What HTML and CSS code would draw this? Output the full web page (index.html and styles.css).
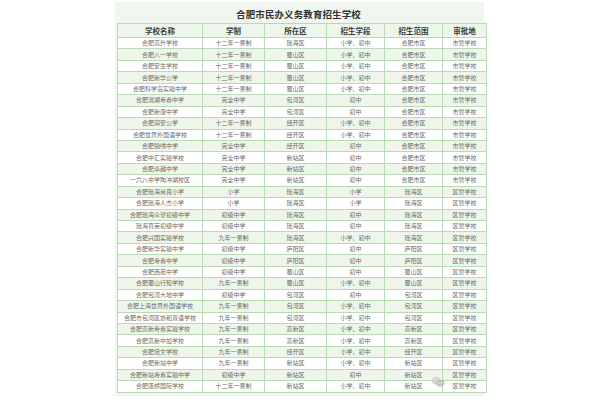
FILE: index.html
```html
<!DOCTYPE html>
<html lang="zh">
<head>
<meta charset="utf-8">
<link rel="stylesheet" href="styles.css">
</head>
<body>
<div class="panel">
  <h1 class="title">合肥市民办义务教育招生学校</h1>
  <table class="grid">
    <thead>
      <tr><th>学校名称</th><th>学制</th><th>所在区</th><th>招生学段</th><th>招生范围</th><th>审批地</th></tr>
    </thead>
    <tbody>
      <tr><td>合肥高升学校</td><td>十二年一贯制</td><td>瑶海区</td><td>小学、初中</td><td>合肥市区</td><td>市管学校</td></tr>
      <tr><td>合肥八一学校</td><td>十二年一贯制</td><td>蜀山区</td><td>小学、初中</td><td>合肥市区</td><td>市管学校</td></tr>
      <tr><td>合肥安生学校</td><td>十二年一贯制</td><td>蜀山区</td><td>小学、初中</td><td>合肥市区</td><td>市管学校</td></tr>
      <tr><td>合肥新华公学</td><td>十二年一贯制</td><td>蜀山区</td><td>小学、初中</td><td>合肥市区</td><td>市管学校</td></tr>
      <tr><td>合肥科学岛实验中学</td><td>十二年一贯制</td><td>蜀山区</td><td>小学、初中</td><td>合肥市区</td><td>市管学校</td></tr>
      <tr><td>合肥滨湖寿春中学</td><td>完全中学</td><td>包河区</td><td>初中</td><td>合肥市区</td><td>市管学校</td></tr>
      <tr><td>合肥新康中学</td><td>完全中学</td><td>包河区</td><td>初中</td><td>合肥市区</td><td>市管学校</td></tr>
      <tr><td>合肥润安公学</td><td>十二年一贯制</td><td>经开区</td><td>小学、初中</td><td>合肥市区</td><td>市管学校</td></tr>
      <tr><td>合肥世界外国语学校</td><td>十二年一贯制</td><td>经开区</td><td>小学、初中</td><td>合肥市区</td><td>市管学校</td></tr>
      <tr><td>合肥锦绣中学</td><td>完全中学</td><td>经开区</td><td>初中</td><td>合肥市区</td><td>市管学校</td></tr>
      <tr><td>合肥中汇实验学校</td><td>完全中学</td><td>新站区</td><td>初中</td><td>合肥市区</td><td>市管学校</td></tr>
      <tr><td>合肥卓越中学</td><td>完全中学</td><td>新站区</td><td>初中</td><td>合肥市区</td><td>市管学校</td></tr>
      <tr><td>一六八中学陶冲湖校区</td><td>完全中学</td><td>新站区</td><td>初中</td><td>合肥市区</td><td>市管学校</td></tr>
      <tr><td>合肥瑶海尚真小学</td><td>小学</td><td>瑶海区</td><td>小学</td><td>瑶海区</td><td>区管学校</td></tr>
      <tr><td>合肥瑶海人杰小学</td><td>小学</td><td>瑶海区</td><td>小学</td><td>瑶海区</td><td>区管学校</td></tr>
      <tr><td>合肥瑶海众望初级中学</td><td>初级中学</td><td>瑶海区</td><td>初中</td><td>瑶海区</td><td>区管学校</td></tr>
      <tr><td>瑶海育英初级中学</td><td>初级中学</td><td>瑶海区</td><td>初中</td><td>瑶海区</td><td>区管学校</td></tr>
      <tr><td>合肥兴国实验学校</td><td>九年一贯制</td><td>瑶海区</td><td>小学、初中</td><td>瑶海区</td><td>区管学校</td></tr>
      <tr><td>合肥新华实验中学</td><td>初级中学</td><td>庐阳区</td><td>初中</td><td>庐阳区</td><td>区管学校</td></tr>
      <tr><td>合肥寿春中学</td><td>初级中学</td><td>庐阳区</td><td>初中</td><td>庐阳区</td><td>区管学校</td></tr>
      <tr><td>合肥西苑中学</td><td>初级中学</td><td>蜀山区</td><td>初中</td><td>蜀山区</td><td>区管学校</td></tr>
      <tr><td>合肥蜀山行知学校</td><td>九年一贯制</td><td>蜀山区</td><td>小学、初中</td><td>蜀山区</td><td>区管学校</td></tr>
      <tr><td>合肥包河大地中学</td><td>初级中学</td><td>包河区</td><td>初中</td><td>包河区</td><td>区管学校</td></tr>
      <tr><td>合肥上海世界外国语学校</td><td>九年一贯制</td><td>包河区</td><td>小学、初中</td><td>包河区</td><td>区管学校</td></tr>
      <tr><td>合肥市包河区协和双语学校</td><td>九年一贯制</td><td>包河区</td><td>小学、初中</td><td>包河区</td><td>区管学校</td></tr>
      <tr><td>合肥高新寿春实验学校</td><td>九年一贯制</td><td>高新区</td><td>小学、初中</td><td>高新区</td><td>区管学校</td></tr>
      <tr><td>合肥高新中加学校</td><td>九年一贯制</td><td>高新区</td><td>小学、初中</td><td>高新区</td><td>区管学校</td></tr>
      <tr><td>合肥培文学校</td><td>九年一贯制</td><td>经开区</td><td>小学、初中</td><td>经开区</td><td>区管学校</td></tr>
      <tr><td>合肥新站中学</td><td>九年一贯制</td><td>新站区</td><td>小学、初中</td><td>新站区</td><td>区管学校</td></tr>
      <tr><td>合肥新站寿春实验中学</td><td>初级中学</td><td>新站区</td><td>初中</td><td>新站区</td><td>区管学校</td></tr>
      <tr><td>合肥康桥国际学校</td><td>十二年一贯制</td><td>新站区</td><td>小学、初中</td><td>新站区</td><td>区管学校</td></tr>
    </tbody>
  </table>
  <div class="mark" aria-hidden="true">
    <svg class="mark-icon" viewBox="0 0 16 14" width="14" height="12">
      <ellipse cx="6" cy="5.5" rx="5.5" ry="4.5" fill="#cfcfcf"/>
      <ellipse cx="10.5" cy="8.5" rx="5" ry="4" fill="#bdbdbd"/>
      <circle cx="4" cy="4.5" r="0.8" fill="#fff"/>
      <circle cx="8" cy="4.5" r="0.8" fill="#fff"/>
      <circle cx="9" cy="8" r="0.7" fill="#fff"/>
      <circle cx="12" cy="8" r="0.7" fill="#fff"/>
    </svg>
  </div>
</div>
</body>
</html>
```

FILE: styles.css
```css
html, body {
  margin: 0;
  padding: 0;
  background: #ffffff;
}

body {
  width: 600px;
  height: 400px;
  overflow: hidden;
  font-family: "Noto Sans CJK SC", "Noto Sans", sans-serif;
}

.panel {
  position: relative;
  margin: 2px 0 0 115px;
  width: 369px;
  height: 394px;
  box-sizing: border-box;
  padding: 0 4px 0 2px;
  background: linear-gradient(180deg, #f1f7f0 0%, #eef6ee 100%);
  display: flex;
  flex-direction: column;
}

.title {
  margin: 0;
  height: 21px;
  box-sizing: border-box;
  padding-top: 6px;
  text-align: center;
  font-size: 9.5px;
  line-height: 13px;
  font-weight: 700;
  color: #333333;
  letter-spacing: 0.1px;
  font-family: "Noto Sans CJK SC", serif;
}

.grid {
  width: 363px;
  border-collapse: collapse;
  table-layout: fixed;
  font-size: 6px;
  color: #6a6a6a;
}

.grid th:nth-child(1) { width: 84px; }
.grid th:nth-child(2) { width: 61px; }
.grid th:nth-child(3) { width: 61px; }
.grid th:nth-child(4) { width: 57px; }
.grid th:nth-child(5) { width: 57px; }
.grid th:nth-child(6) { width: 43px; }

.grid th,
.grid td {
  border: 1px solid #b9d9b7;
  padding: 0;
  text-align: center;
  white-space: nowrap;
  overflow: hidden;
}

.grid thead tr {
  height: 14px;
  background: #edf6ea;
}

.grid th {
  font-size: 7.5px;
  line-height: 12px;
  font-weight: 700;
  color: #3a3a3a;
}

.grid tbody tr {
  height: 11.45px;
}

.grid td {
  line-height: 10px;
}

.grid tbody tr:nth-child(odd) {
  background: #ffffff;
}

.grid tbody tr:nth-child(even) {
  background: #eef6eb;
}

.mark {
  position: absolute;
  left: 316px;
  top: 374px;
  display: flex;
  align-items: center;
  opacity: 0.85;
}
```
